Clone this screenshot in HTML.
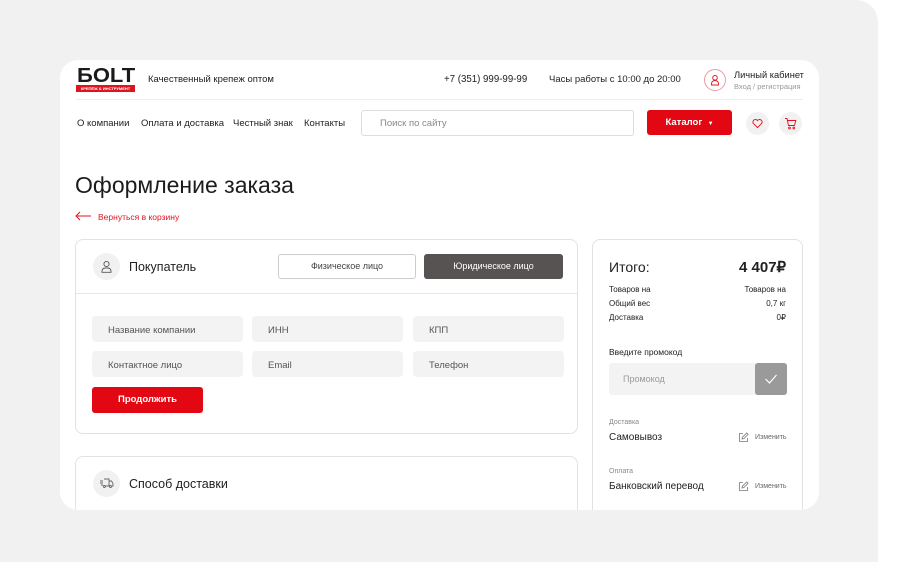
<!DOCTYPE html>
<html><head><meta charset="utf-8"><style>
*{margin:0;padding:0;box-sizing:border-box}
body{width:919px;height:562px;background:#fff;font-family:"Liberation Sans","Noto Sans CJK JP",sans-serif;color:#222;position:relative;overflow:hidden}
.a{position:absolute}
.bg{left:0;top:0;width:878px;height:562px;background:#f1f1f1;border-top-right-radius:22px}
.card{left:60px;top:60px;width:759px;height:450px;background:#fff;border-radius:18px;overflow:hidden}
.t{position:absolute;white-space:nowrap}
.inp{position:absolute;background:#f3f3f3;border-radius:4px;height:26px;font-size:9.5px;color:#555;padding:9px 0 0 16px}
.box{position:absolute;border:1px solid #e2e2e2;border-radius:8px;background:#fff}
.circ{position:absolute;border-radius:50%;background:#f1f1f1}
</style></head><body>
<div class="a bg"></div>
<div class="a card">
  <div class="t" style="left:17px;top:5px;font-size:20px;font-weight:900;letter-spacing:0px;color:#1a1a1a;transform:scaleX(1.1);transform-origin:left">БОLT</div>
  <div class="a" style="left:16px;top:25px;width:59px;height:7px;background:#e0141e;color:#fff;font-size:4px;font-weight:bold;text-align:center;line-height:7px;overflow:hidden">КРЕПЁЖ &amp; ИНСТРУМЕНТ</div>
  <div class="t" style="left:88px;top:14px;font-size:9.5px;color:#222">Качественный крепеж оптом</div>
  <div class="t" style="left:384px;top:14px;font-size:9.7px">+7 (351) 999-99-99</div>
  <div class="t" style="left:489px;top:14px;font-size:9.5px">Часы работы с 10:00 до 20:00</div>
  <div class="a" style="left:644px;top:9px;width:22px;height:22px;border:1px solid #e89aa0;border-radius:50%"></div>
  <svg class="a" style="left:649px;top:14px" width="12" height="12" viewBox="0 0 12 12" fill="none" stroke="#e0141e" stroke-width="0.9"><circle cx="6" cy="3.8" r="2.3"/><path d="M2.5 11V9.5a3.5 3 0 0 1 7 0V11z"/></svg>
  <div class="t" style="left:674px;top:10px;font-size:9.3px">Личный кабинет</div>
  <div class="t" style="left:674px;top:22px;font-size:7.5px;color:#999">Вход / регистрация</div>
  <div class="a" style="left:16px;top:39px;width:727px;height:1px;background:#eee"></div>
  <div class="t" style="left:17px;top:58px;font-size:9.5px">О компании</div>
  <div class="t" style="left:81px;top:58px;font-size:9.5px">Оплата и доставка</div>
  <div class="t" style="left:173px;top:58px;font-size:9.5px">Честный знак</div>
  <div class="t" style="left:244px;top:58px;font-size:9.5px">Контакты</div>
  <div class="a" style="left:301px;top:50px;width:273px;height:26px;border:1px solid #ddd;border-radius:3px"></div>
  <div class="t" style="left:320px;top:58px;font-size:9.5px;color:#888">Поиск по сайту</div>
  <div class="a" style="left:587px;top:50px;width:85px;height:25px;background:#e30613;border-radius:3px;color:#fff;font-size:9.5px;font-weight:bold;text-align:center;line-height:25px">Каталог &nbsp;<span style="font-size:6px">▼</span></div>
  <div class="circ" style="left:686px;top:52px;width:23px;height:23px"></div>
  <svg class="a" style="left:692px;top:58px" width="11" height="11" viewBox="0 0 12 12" fill="none" stroke="#e0141e" stroke-width="1"><path d="M6 10.5L1.5 6A2.5 2.5 0 0 1 6 2.8 2.5 2.5 0 0 1 10.5 6z"/></svg>
  <div class="circ" style="left:719px;top:52px;width:23px;height:23px"></div>
  <svg class="a" style="left:724px;top:57px" width="13" height="13" viewBox="0 0 13 13" fill="none" stroke="#e0141e" stroke-width="0.9"><path d="M1 1.5h2l1.5 7h6l1.3-5H3.6"/><circle cx="5.5" cy="11" r="0.9"/><circle cx="9.8" cy="11" r="0.9"/></svg>

  <div class="t" style="left:15px;top:112px;font-size:23px;color:#1c1c1c">Оформление заказа</div>
  <svg class="a" style="left:15px;top:151px" width="17" height="10" viewBox="0 0 17 10" fill="none" stroke="#e0141e" stroke-width="1"><path d="M16 5H1M5 1L1 5l4 4"/></svg>
  <div class="t" style="left:38px;top:152px;font-size:8.5px;color:#e0141e">Вернуться в корзину</div>

  <div class="box" style="left:15px;top:179px;width:503px;height:195px"></div>
  <div class="a" style="left:16px;top:233px;width:501px;height:1px;background:#e6e6e6"></div>
  <div class="circ" style="left:33px;top:193px;width:27px;height:27px"></div>
  <svg class="a" style="left:40px;top:200px" width="13" height="13" viewBox="0 0 13 13" fill="none" stroke="#555" stroke-width="0.9"><circle cx="6.5" cy="4" r="2.6"/><path d="M2 12.3V11a3.2 3 0 0 1 3.2-3h2.6A3.2 3 0 0 1 11 11v1.3z"/></svg>
  <div class="t" style="left:69px;top:200px;font-size:12.5px">Покупатель</div>
  <div class="a" style="left:218px;top:194px;width:138px;height:25px;border:1px solid #ccc;border-radius:3px;font-size:9px;color:#444;text-align:center;line-height:23px">Физическое лицо</div>
  <div class="a" style="left:364px;top:194px;width:139px;height:25px;background:#585353;border-radius:3px;font-size:9px;color:#fff;text-align:center;line-height:25px">Юридическое лицо</div>
  <div class="inp" style="left:32px;top:256px;width:151px">Название компании</div>
  <div class="inp" style="left:192px;top:256px;width:151px">ИНН</div>
  <div class="inp" style="left:353px;top:256px;width:151px">КПП</div>
  <div class="inp" style="left:32px;top:291px;width:151px">Контактное лицо</div>
  <div class="inp" style="left:192px;top:291px;width:151px">Email</div>
  <div class="inp" style="left:353px;top:291px;width:151px">Телефон</div>
  <div class="a" style="left:32px;top:327px;width:111px;height:26px;background:#e30613;border-radius:3px;color:#fff;font-size:9.5px;font-weight:bold;text-align:center;line-height:26px">Продолжить</div>

  <div class="box" style="left:15px;top:396px;width:503px;height:80px"></div>
  <div class="circ" style="left:33px;top:410px;width:27px;height:27px"></div>
  <svg class="a" style="left:39px;top:417px" width="15" height="12" viewBox="0 0 15 12" fill="none" stroke="#666" stroke-width="0.9"><path d="M5 2h5v7H6M10 4h2.5L14 6.5V9h-1M1 4h3M1 6h3M2 8h2"/><circle cx="5.3" cy="9.5" r="1"/><circle cx="11.5" cy="9.5" r="1"/></svg>
  <div class="t" style="left:69px;top:417px;font-size:12.5px">Способ доставки</div>

  <div class="box" style="left:532px;top:179px;width:211px;height:320px"></div>
  <div class="t" style="left:549px;top:199px;font-size:14px">Итого:</div>
  <div class="t" style="left:679px;top:198px;font-size:15px;font-weight:bold">4 407₽</div>
  <div class="t" style="left:549px;top:225px;font-size:8px">Товаров на</div>
  <div class="t" style="right:33px;top:225px;font-size:8px">Товаров на</div>
  <div class="t" style="left:549px;top:239px;font-size:8px">Общий вес</div>
  <div class="t" style="right:33px;top:239px;font-size:8px">0,7 кг</div>
  <div class="t" style="left:549px;top:253px;font-size:8px">Доставка</div>
  <div class="t" style="right:33px;top:253px;font-size:8px">0₽</div>
  <div class="t" style="left:549px;top:287px;font-size:8.5px">Введите промокод</div>
  <div class="a" style="left:549px;top:303px;width:178px;height:32px;background:#f3f3f3;border-radius:3px"></div>
  <div class="t" style="left:563px;top:314px;font-size:9px;color:#999">Промокод</div>
  <div class="a" style="left:695px;top:303px;width:32px;height:32px;background:#9a9a9a;border-radius:3px"></div>
  <svg class="a" style="left:704px;top:313px" width="14" height="12" viewBox="0 0 14 12" fill="none" stroke="#fff" stroke-width="1.2"><path d="M1.5 6l4 4L12.5 2"/></svg>
  <div class="t" style="left:549px;top:359px;font-size:7px;color:#888">Доставка</div>
  <div class="t" style="left:549px;top:372px;font-size:10px">Самовывоз</div>
  <svg class="a" style="left:678px;top:372px" width="11" height="11" viewBox="0 0 11 11" fill="none" stroke="#777" stroke-width="0.8"><path d="M5 1.5H1.5v8h8V6M4 7l.4-1.8L8.7.9l1.4 1.4L5.8 6.6z"/></svg>
  <div class="t" style="left:695px;top:374px;font-size:7px;color:#666">Изменить</div>
  <div class="t" style="left:549px;top:408px;font-size:7px;color:#888">Оплата</div>
  <div class="t" style="left:549px;top:421px;font-size:10px">Банковский перевод</div>
  <svg class="a" style="left:678px;top:421px" width="11" height="11" viewBox="0 0 11 11" fill="none" stroke="#777" stroke-width="0.8"><path d="M5 1.5H1.5v8h8V6M4 7l.4-1.8L8.7.9l1.4 1.4L5.8 6.6z"/></svg>
  <div class="t" style="left:695px;top:423px;font-size:7px;color:#666">Изменить</div>
</div>
</body></html>
